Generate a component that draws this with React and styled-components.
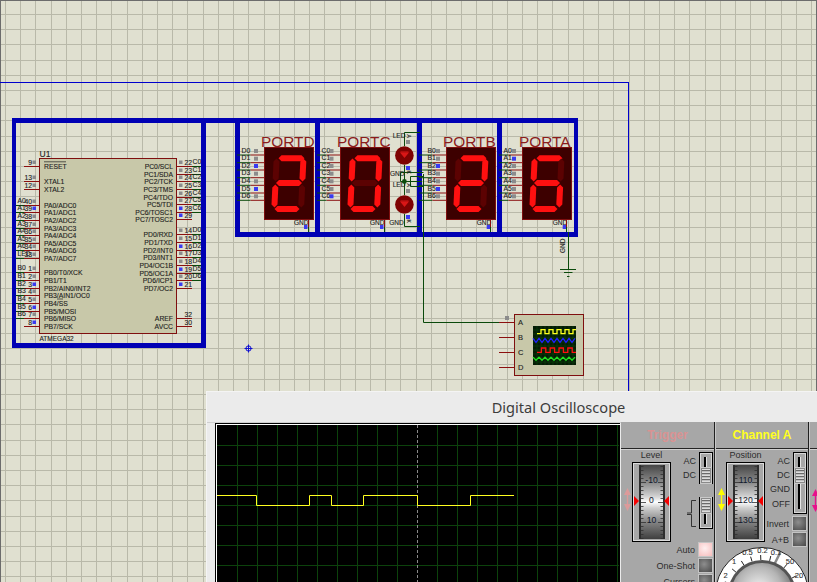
import React from 'react';
import styled, { createGlobalStyle } from 'styled-components';

const Global = createGlobalStyle`
  html, body { margin: 0; padding: 0; background: #e0e0d0; overflow: hidden; }
  #root { width: 817px; height: 582px; }
`;

/* ---------- desktop ---------- */
const Desktop = styled.div`
  position: relative; width: 817px; height: 582px; overflow: hidden; background: #e0e0d0;
`;
const Sheet = styled.svg`
  display: block; width: 817px; height: 582px;
  font-family: "Liberation Sans", Arial, sans-serif;
`;
const GridLine = styled.line`stroke: #b9b9a9; stroke-width: 1; shape-rendering: crispEdges;`;
const EdgeLine = styled.line`stroke: #6c6c6c; stroke-width: 1; shape-rendering: crispEdges;`;
const Frame = styled.path`fill: none; stroke: #0000cc; stroke-width: 1.3; shape-rendering: crispEdges;`;
const Bus = styled.rect`fill: #0000b4; shape-rendering: crispEdges;`;
const Wire = styled.path`fill: none; stroke: ${p => (p.$red ? '#8b0f0f' : '#0b4a0b')}; stroke-width: 1;`;
const Chip = styled.rect`fill: #c8c8a9; stroke: #7f0f0f; stroke-width: 1;`;
const Small = styled.text`
  font-size: ${p => p.$size || 6.8}px; fill: ${p => p.$fill || '#1d1d1d'};
  stroke: ${p => p.$fill || '#1d1d1d'}; stroke-width: 0.12;
  text-anchor: ${p => p.$anchor || 'start'};
`;
const Marker = styled.rect`fill: ${p => (p.$on ? '#3a3af0' : '#8c8c8c')};`;
const DisplayBody = styled.rect`fill: #3d0000; stroke: #7f0f0f; stroke-width: 1;`;
const Segment = styled.polygon`fill: ${p => (p.$on ? '#ff1010' : '#5c0202')};`;
const PortName = styled.text`font-size: 15.4px; fill: #8b1c1c;`;
const LedBody = styled.circle`fill: #7e0202;`;
const LedMark = styled.path`fill: #d91616;`;

/* ---------- oscilloscope window ---------- */
const ScopeWindow = styled.div`
  position: absolute; left: 207px; top: 392px; width: 610px; height: 190px;
  background: #ebebeb; box-shadow: 0 0 0 1px #f4f4f4; overflow: hidden;
  display: flex; flex-direction: column;
`;
const TitleBar = styled.div`
  height: 30px; flex: none; display: flex; align-items: center; justify-content: center;
  padding-left: 93px; padding-bottom: 1px; box-sizing: border-box;
  font: 14.6px "Noto Sans", "Open Sans", sans-serif; color: #3c3c3c;
`;
const ScopeBody = styled.div`
  flex: 1; display: flex; padding-left: 8px; min-height: 0;
  background: linear-gradient(#cfcfcf 1px, #ebebeb 1px);
`;
const ScreenFrame = styled.div`
  margin-top: 1px; width: 403px; flex: none; background: #000;
  border-left: 1px solid #000; border-top: 1px solid #000; box-sizing: content-box;
  box-shadow: inset 1px 1px 0 #fff; padding: 1px 0 0 1px; margin-right: 1px;
`;
const ScreenPlot = styled.svg`display: block; width: 402px; height: 157px;`;
const Panel = styled.section`
  flex: ${p => (p.$width ? 'none' : '1')}; width: ${p => (p.$width ? `${p.$width}px` : 'auto')};
  background: #a7a7a7; border-right: ${p => (p.$width ? '1px solid #202020' : '0')};
  box-shadow: ${p => (p.$width ? '1px 0 0 #c8c8c8' : 'none')};
  margin-right: ${p => (p.$width ? '1px' : '0')};
  display: flex; flex-direction: column; overflow: hidden;
  font-family: "Liberation Sans", Arial, sans-serif;
`;
const PanelHeader = styled.header`
  height: 26px; flex: none; display: flex; align-items: center; justify-content: center;
  border-bottom: 1px solid #252525; box-shadow: 0 1px 0 #cfcfcf;
  font-size: 12px; font-weight: bold; color: ${p => p.$color}; white-space: nowrap;
`;
const PanelTop = styled.div`
  display: flex; justify-content: space-between; padding: 0 1px 0 ${p => p.$left}px; flex: none;
`;
const WheelColumn = styled.div`display: flex; flex-direction: column; align-items: center; width: 39px; flex: none;`;
const WheelTitle = styled.div`
  height: 13px; font-size: 9px; line-height: 13px; color: #2c2c2c;
`;
const WheelBox = styled.div`
  position: relative; width: 39px; height: 80px; box-sizing: border-box;
  border: 1px solid #000; box-shadow: inset 0 0 0 1px #dcdcdc;
  display: flex; align-items: center; justify-content: center;
`;
const WheelFace = styled.div`
  position: relative; width: 26px; height: 74px; box-sizing: border-box;
  border-left: 2px solid #2d2d2d; border-right: 2px solid #2d2d2d;
  background: linear-gradient(#464646 0%, #8f8f8f 25%, #d0d0d0 42%, #fff 50%, #cfcfcf 58%, #8a8a8a 75%, #3f3f3f 100%);
  display: flex; flex-direction: column; align-items: center; padding-top: 5px;
`;
const WheelValue = styled.div`
  position: relative; height: 20px; flex: none; display: flex; align-items: center;
  font-size: 8.6px; color: #10182c;
`;
const WheelTicks = styled.svg`position: absolute; left: 0; top: 0; width: 22px; height: 74px;`;
const Pointer = styled.svg`
  position: absolute; top: 33px; ${p => (p.$right ? 'right: 1px' : 'left: 1px')};
  width: 5px; height: 10px; fill: #f40000; z-index: 1;
`;
const LevelArrow = styled.svg`
  position: absolute; top: 25px; left: -9px; width: 7px; height: 23px;
  fill: ${p => p.$color}; stroke: ${p => p.$color};
`;
const Controls = styled.div`
  flex: none; width: 42px;
  display: flex; flex-direction: column; align-items: flex-end; padding-top: 3px;
`;
const ControlRow = styled.div`
  display: flex; align-items: flex-start; gap: ${p => p.$gap ?? 3}px; margin-top: ${p => p.$top || 0}px;
`;
const ModeLabels = styled.div`
  display: flex; flex-direction: column; align-items: flex-end; padding-top: 2px;
  font-size: 9px; line-height: 14.2px; color: #2c2c2c;
`;
const SliderBox = styled.div`
  position: relative; width: 14px; height: ${p => p.$height}px; box-sizing: border-box; flex: none;
  border: 1px solid #000; box-shadow: inset 0 0 0 1px #d8d8d8;
`;
const SliderTrack = styled.div`
  position: absolute; left: 4px; width: 2px; top: 4px; bottom: 4px;
  background: #000; border-right: 1px solid #e4e4e4;
`;
const SliderThumb = styled.div`
  position: absolute; left: 1px; width: 10px; height: 15px; top: ${p => p.$top}px;
  background: repeating-linear-gradient(#dcdcdc 0 1px, #6a6a6a 1px 2px, #bdbdbd 2px 3px);
  border: 1px solid #8a8a8a; box-sizing: border-box; box-shadow: 0 0 0 1px #c9c9c9;
`;
const EdgeIcon = styled.svg`
  width: 9px; height: 27px; margin-top: 3px; fill: none; stroke: #333; stroke-width: 1; flex: none;
`;
const PushRow = styled.div`
  display: flex; align-items: center; gap: 3px; height: 15px; margin-top: ${p => p.$top ?? 1}px;
  font-size: 9px; color: #2c2c2c; white-space: nowrap;
`;
const PushButton = styled.div`
  width: 15px; height: 15px; box-sizing: border-box; border: 1px solid #c4c4c4; flex: none;
  background: ${p => (p.$lit
    ? 'radial-gradient(circle at 45% 40%, #fff0f0, #f7bcbc)'
    : 'radial-gradient(circle at 40% 40%, #8e8e8e, #474747)')};
`;
const SpareBody = styled.div`padding: 40px 0 0 2px;`;
const KnobArt = styled.svg`display: block; width: 94px; height: 36px; margin-left: -1px; flex: none;
  font-family: "Liberation Sans", Arial, sans-serif;`;

/* ---------- data ---------- */
const verticals = Array.from({ length: 54 }, (_, i) => Math.round(5 + 15.208 * i) + 0.5);
const horizontals = Array.from({ length: 38 }, (_, i) => Math.round(14 + 15.2 * i) + 0.5);

const leftPins = [
  ['RESET', '9', 166], ['XTAL1', '13', 181], ['XTAL2', '12', 189],
  ['PA0/ADC0', '40', 205, 'A0'], ['PA1/ADC1', '39', 212, 'A1', 1], ['PA2/ADC2', '38', 220, 'A2'],
  ['PA3/ADC3', '37', 228, 'A3'], ['PA4/ADC4', '36', 235, 'A4'], ['PA5/ADC5', '35', 243, 'A5'],
  ['PA6/ADC6', '34', 250, 'A6'], ['PA7/ADC7', '33', 258, 'LED'],
  ['PB0/T0/XCK', '1', 272, 'B0'], ['PB1/T1', '2', 280, 'B1'], ['PB2/AIN0/INT2', '3', 288, 'B2', 1],
  ['PB3/AIN1/OC0', '4', 295, 'B3'], ['PB4/SS', '5', 303, 'B4'], ['PB5/MOSI', '6', 311, 'B5', 1],
  ['PB6/MISO', '7', 318, 'B6'], ['PB7/SCK', '8', 326, null, 1],
];
const rightPins = [
  ['PC0/SCL', '22', 166, 'C0'], ['PC1/SDA', '23', 174, 'C1'], ['PC2/TCK', '24', 181, 'C2'],
  ['PC3/TMS', '25', 189, 'C3'], ['PC4/TDO', '26', 197, 'C4'], ['PC5/TDI', '27', 204, 'C5'],
  ['PC6/TOSC1', '28', 212, 'C6', 1], ['PC7/TOSC2', '29', 219, null, 1],
  ['PD0/RXD', '14', 234, 'D0'], ['PD1/TXD', '15', 242, 'D1'], ['PD2/INT0', '16', 250, 'D2', 1],
  ['PD3/INT1', '17', 257, 'D3'], ['PD4/OC1B', '18', 265, 'D4'], ['PD5/OC1A', '19', 273, 'D5', 1],
  ['PD6/ICP1', '20', 280, 'D6'], ['PD7/OC2', '21', 288, null, 1],
  ['AREF', '32', 318, null, 0, true], ['AVCC', '30', 326, null, 0, true],
];
const pinRows = [155, 162.7, 170, 177.7, 185.3, 193, 200.3];
const displays = [
  { name: 'PORTD', prefix: 'D', x: 264.5, wire: 237, label: 241.5, mark: 256, blue: [2, 5], on: 'abged', gnd: 294 },
  { name: 'PORTC', prefix: 'C', x: 340.5, wire: 317, label: 321.5, mark: 331.5, blue: [6], on: 'abcdef', gnd: 370 },
  { name: 'PORTB', prefix: 'B', x: 446.5, wire: 419, label: 427.5, mark: 438, blue: [2, 5], on: 'abged', gnd: 476.7 },
  { name: 'PORTA', prefix: 'A', x: 522.5, wire: 499, label: 503.5, mark: 514, blue: [1], on: 'afgedc', gnd: 552.7 },
];

const hSeg = (a, b, c) => `${a},${c} ${a + 3},${c - 3} ${b - 3},${c - 3} ${b},${c} ${b - 3},${c + 3} ${a + 3},${c + 3}`;
const vSeg = (xt, xb, a, b) => `${xt},${a} ${xt + 3},${a + 3} ${xb + 3},${b - 3} ${xb},${b} ${xb - 3},${b - 3} ${xt - 3},${a + 3}`;
const SEGMENTS = {
  a: hSeg(14, 40, 10.7),
  g: hSeg(11.5, 37.5, 35.5),
  d: hSeg(10, 35, 61.4),
  f: vSeg(12, 11.2, 11, 34),
  b: vSeg(38.8, 38, 11, 34),
  e: vSeg(10.8, 10, 37, 60),
  c: vSeg(37.6, 36.8, 37, 60),
};

const square = (start, end, y1, y2, w) => {
  let d = `M${start} ${y2}`; let x = start; let hi = false;
  while (x < end) {
    const n = Math.min(x + w, end);
    d += `H${n}`;
    if (n < end) { hi = !hi; d += `V${hi ? y1 : y2}`; }
    x = n;
  }
  return d;
};
const ripple = (start, end, y, a, w) => {
  const pts = []; let up = true;
  for (let x = start; x <= end; x += w) { pts.push(`${x},${up ? y - a : y + a}`); up = !up; }
  return `M${pts.join('L')}`;
};

const SevenSeg = ({ d }) => (
  <g>
    <PortName x={d.x - 3.5} y={147}>{d.name}</PortName>
    <DisplayBody x={d.x} y={147.5} width={49} height={72} />
    <g transform={`translate(${d.x} 147.5)`}>
      {Object.entries(SEGMENTS).map(([k, pts]) => <Segment key={k} points={pts} $on={d.on.includes(k)} />)}
    </g>
    {pinRows.map((y, i) => (
      <g key={y}>
        <Wire d={`M${d.wire} ${y}H${d.x - 14}`} />
        <Wire $red d={`M${d.x - 14} ${y}H${d.x}`} />
        <Small x={d.label} y={y - 2.5}>{`${d.prefix}${i}`}</Small>
        <Marker x={d.mark - 2} y={y - 6} width={4} height={4} $on={d.blue.includes(i)} />
      </g>
    ))}
    <Small x={d.gnd} y={225} $size={6.5}>GND</Small>
    <Marker x={d.gnd + 10} y={225} width={3.5} height={4} $on />
    <Wire $red d={`M${d.x + 44} 220V227`} />
    <Wire d={`M${d.x + 44} 227V232`} />
  </g>
);

const Led = ({ cy }) => (
  <g>
    <LedBody cx={404.4} cy={cy} r={9.3} />
    <LedMark d={`M400 ${cy - 3}H409L404.5 ${cy + 2.5}Z`} />
    <LedMark d={`M400.5 ${cy - 4}H408.5V${cy - 3}H400.5Z`} />
    <Small x={392.7} y={cy - 18} $size={6.5}>LED</Small>
    <Marker x={406} y={cy - 15.5} width={4} height={4} />
    <Marker x={406} y={cy + 10.5} width={4} height={4} $on />
    <Small $size={5} x={0} y={0} transform={`translate(406.5 ${cy - 21}) rotate(90)`}>A</Small>
    <Small $size={5} x={0} y={0} transform={`translate(406.5 ${cy + 15}) rotate(90)`}>K</Small>
  </g>
);

const Schematic = () => (
  <Sheet viewBox="0 0 817 582">
    {verticals.map(x => <GridLine key={x} x1={x} x2={x} y1={0} y2={582} />)}
    {horizontals.map(y => <GridLine key={y} x1={0} x2={817} y1={y} y2={y} />)}
    <EdgeLine x1={0} x2={817} y1={0.5} y2={0.5} />
    <EdgeLine x1={0.5} x2={0.5} y1={0} y2={582} />
    <EdgeLine x1={816.5} x2={816.5} y1={0} y2={582} />
    <Frame d="M0 82.5H628.5V400" />

    {/* wires under the buses */}
    <Wire d="M423.5 174V322.5H499" />
    <Wire $red d="M499 322.5H514" />
    <Wire d="M404.5 132.5V146M404.5 165V195M404.5 214V226.5" />
    <Wire d="M400.5 172.5V181.5M410.5 176.5V186.5" />

    {/* MCU */}
    <Small $size={8.5} x={39.5} y={156.5}>U1</Small>
    <Chip x={39.5} y={158.5} width={137} height={175} />
    {leftPins.map(([name, num, y, net, blue]) => (
      <g key={name}>
        <Wire $red d={`M24 ${y + 0.5}H39`} />
        {net && <Wire d={`M13 ${y + 0.5}H24`} />}
        <Small x={44} y={y + 2.5}>{name}</Small>
        <Small x={32} y={y - 1} $anchor="end">{num}</Small>
        <Marker x={32.5} y={y - 5.5} width={3.5} height={3.5} $on={blue} />
        {net && <Small x={17.5} y={y - 2.5}>{net}</Small>}
      </g>
    ))}
    <path d="M44 161.8H66M57 299H63" stroke="#1d1d1d" strokeWidth={0.7} fill="none" />
    {rightPins.map(([name, num, y, net, blue, plain]) => (
      <g key={name}>
        <Wire $red d={`M177 ${y + 0.5}H192`} />
        {net && <Wire d={`M192 ${y + 0.5}H203`} />}
        <Small x={173} y={y + 2.5} $anchor="end">{name}</Small>
        <Small x={184.5} y={y - 1}>{num}</Small>
        {!plain && <Marker x={179} y={y - 5.5} width={3.5} height={3.5} $on={blue} />}
        {net && <Small x={192.5} y={y - 2.5}>{net}</Small>}
      </g>
    ))}
    <Small x={39.5} y={340.5} $size={6.5}>ATMEGA32</Small>

    {/* subsheet buses */}
    <Bus x={12} y={118} width={566} height={5} />
    <Bus x={12} y={118} width={4} height={230} />
    <Bus x={201} y={118} width={5} height={230} />
    <Bus x={12} y={343} width={194} height={5} />
    <Bus x={235} y={232} width={343} height={5} />
    <Bus x={235} y={118} width={5} height={119} />
    <Bus x={315} y={118} width={5} height={119} />
    <Bus x={417} y={118} width={5} height={119} />
    <Bus x={497} y={118} width={5} height={119} />
    <Bus x={574} y={118} width={4} height={119} />

    <Wire d="M404.5 132.5H420M400.5 172.5H423.5M400.5 181.5H422M410.5 176.5H423.5M410.5 186.5H423M404.5 226.5H420" />
    <Wire d="M423.5 174V237" />

    {displays.map(d => <SevenSeg key={d.name} d={d} />)}
    <Led cy={155.5} />
    <Led cy={204.5} />
    <Small x={390} y={175.7} $size={6.5}>GND</Small>
    <Small x={389.3} y={225} $size={6.5}>GND</Small>
    <circle cx={404.4} cy={181.5} r={2.4} fill="#0b4a0b" />

    {/* ground */}
    <Wire d="M568.5 232V269.5M560 269.5H576M564 272.5H572.5M567 276.5H569.5" />
    <Small transform="translate(565 253) rotate(-90)" x={0} y={0} $size={6.5}>GND</Small>

    {/* logic analyser symbol */}
    <Marker x={505} y={316} width={4} height={4} />
    <Wire $red d="M499 337.5H514M499 352.5H514M499 367.5H514" />
    <Chip x={514.5} y={314.5} width={69} height={61} />
    <Small $size={7.5} x={518} y={325}>A</Small>
    <Small $size={7.5} x={518} y={340}>B</Small>
    <Small $size={7.5} x={518} y={355}>C</Small>
    <Small $size={7.5} x={518} y={370}>D</Small>
    <rect x={533} y={326} width={43} height={39} fill="#041c04" />
    <path
      d={[330, 334, 338, 342, 346, 350, 354, 358, 362].map(y => `M533 ${y}H576`).join('') + [537, 541, 545, 549, 553, 557, 561, 565, 569, 573].map(x => `M${x} 326V365`).join('')}
      stroke="#0b3f0b" strokeWidth={0.7} fill="none"
    />
    <path d={square(537, 576, 329.7, 333.7, 4)} stroke="#ffff20" strokeWidth={1.3} fill="none" />
    <path d={ripple(533, 576, 340.3, 2, 3)} stroke="#2020ff" strokeWidth={1.3} fill="none" />
    <path d={square(537, 576, 348, 352.3, 4.4)} stroke="#ff1010" strokeWidth={1.3} fill="none" />
    <path d={ripple(533, 576, 358.7, 1.6, 3)} stroke="#20e020" strokeWidth={1.3} fill="none" />

    {/* origin marker */}
    <circle cx={248.5} cy={348.5} r={2.6} fill="none" stroke="#1010d0" />
    <path d="M244.5 348.5H252.5M248.5 344.5V352.5" stroke="#1010d0" fill="none" />
  </Sheet>
);

const Trace = () => {
  const grid = [];
  for (let i = 1; i < 21; i++) if (i !== 10) grid.push(`M${20 * i + 0.5} 0V157`);
  for (let i = 1; i < 8; i++) grid.push(`M0 ${20 * i + 0.5}H402`);
  return (
    <ScreenPlot viewBox="0 0 402 157">
      <path d={grid.join('')} stroke="#0c420c" fill="none" />
      <path d="M200.5 0V157" stroke="#8a8a8a" strokeDasharray="3 2" fill="none" />
      <path d="M0 70.5H39.5V80.5H92.5V70.5H114.5V80.5H146.5V70.5H200.5V80.5H253.5V70.5H297" stroke="#ffff20" fill="none" />
    </ScreenPlot>
  );
};

const Ticks = () => {
  const parts = [];
  for (let i = 0; i <= 18; i++) {
    const y = 1 + i * 4;
    const len = i % 5 === 4 ? 5 : 2.5;
    parts.push(`M0 ${y + 0.5}H${len}M22 ${y + 0.5}H${22 - len}`);
  }
  return (
    <WheelTicks viewBox="0 0 22 74">
      <path d={parts.join('')} stroke="#303030" strokeWidth={0.8} fill="none" />
    </WheelTicks>
  );
};

const Wheel = ({ title, values, arrow }) => (
  <WheelColumn>
    <WheelTitle>{title}</WheelTitle>
    <WheelBox>
      <LevelArrow viewBox="0 0 7 23" $color={arrow}>
        <path d="M3.5 0L7 7H0ZM3.5 23L7 16H0Z" stroke="none" />
        <path d="M3.5 6V17" fill="none" strokeWidth={1.4} />
      </LevelArrow>
      <Pointer viewBox="0 0 5 10"><path d="M0 0L5 5L0 10Z" /></Pointer>
      <WheelFace>
        <Ticks />
        {values.map(v => <WheelValue key={v}>{v}</WheelValue>)}
      </WheelFace>
      <Pointer $right viewBox="0 0 5 10"><path d="M5 0L0 5L5 10Z" /></Pointer>
    </WheelBox>
  </WheelColumn>
);

const Slider = ({ height, thumb }) => (
  <SliderBox $height={height}>
    <SliderTrack />
    <SliderThumb $top={thumb} />
  </SliderBox>
);

const Knob = () => {
  const cx = 47; const cy = 47;
  const ticks = [-72, -50, -32, -17, -2, 13, 40, 62].map(a => {
    const r = (a * Math.PI) / 180;
    return `M${cx + 34 * Math.sin(r)} ${cy - 34 * Math.cos(r)}L${cx + 39 * Math.sin(r)} ${cy - 39 * Math.cos(r)}`;
  }).join('');
  return (
    <KnobArt viewBox="0 0 94 36">
      <defs>
        <radialGradient id="knobFace" cx="0.45" cy="0.42" r="0.6">
          <stop offset="0" stopColor="#f2f2f2" />
          <stop offset="0.6" stopColor="#b5b5b5" />
          <stop offset="1" stopColor="#6c6c6c" />
        </radialGradient>
      </defs>
      <circle cx={cx} cy={cy} r={46.5} fill="#fff" stroke="#222" />
      <path d="M65.5 5L59.5 17" stroke="#8a8a8a" strokeWidth={2.5} fill="none" />
      <path d={ticks} stroke="#222" fill="none" />
      <circle cx={cx} cy={cy} r={34} fill="#545454" />
      <circle cx={cx} cy={cy} r={31} fill="url(#knobFace)" />
      <Small $size={7.5} x={32.5} y={8} $anchor="middle" $fill="#333">0.5</Small>
      <Small $size={7.5} x={47.5} y={6} $anchor="middle" $fill="#333">0.2</Small>
      <Small $size={7.5} x={61} y={8} $anchor="middle" $fill="#333">0.1</Small>
      <Small $size={7.5} x={19} y={17} $anchor="middle" $fill="#333">1</Small>
      <Small $size={7.5} x={10.5} y={31} $anchor="middle" $fill="#333">2</Small>
      <Small $size={7.5} x={75} y={17} $anchor="middle" $fill="#333">50</Small>
      <Small $size={7.5} x={84} y={31} $anchor="middle" $fill="#333">20</Small>
    </KnobArt>
  );
};

const Oscilloscope = () => (
  <ScopeWindow>
    <TitleBar>Digital Oscilloscope</TitleBar>
    <ScopeBody>
      <ScreenFrame><Trace /></ScreenFrame>
      <Panel $width={93}>
        <PanelHeader $color="#d99393">Trigger</PanelHeader>
        <PanelTop $left={11}>
          <Wheel title="Level" values={['-10', '0', '10']} arrow="#dc9a9a" />
          <Controls>
            <ControlRow>
              <ModeLabels><span>AC</span><span>DC</span></ModeLabels>
              <Slider height={32} thumb={15} />
            </ControlRow>
            <ControlRow $top={13}>
              <EdgeIcon viewBox="0 0 9 27">
                <path d="M9 .5H4.5V13H0M0 14.5H4.5V26.5H9" />
              </EdgeIcon>
              <Slider height={32} thumb={0} />
            </ControlRow>
            <PushRow $top={13}>Auto<PushButton $lit /></PushRow>
            <PushRow>One-Shot<PushButton /></PushRow>
            <PushRow>Cursors<PushButton /></PushRow>
          </Controls>
        </PanelTop>
      </Panel>
      <Panel $width={92}>
        <PanelHeader $color="#ffff20">Channel A</PanelHeader>
        <PanelTop $left={10}>
          <Wheel title="Position" values={['110', '120', '130']} arrow="#ffff00" />
          <Controls>
            <ControlRow>
              <ModeLabels><span>AC</span><span>DC</span><span>GND</span><span>OFF</span></ModeLabels>
              <Slider height={62} thumb={15} />
            </ControlRow>
            <PushRow $top={2}>Invert<PushButton /></PushRow>
            <PushRow>A+B<PushButton /></PushRow>
          </Controls>
        </PanelTop>
        <Knob />
      </Panel>
      <Panel>
        <PanelHeader $color="#f0f0f0" />
        <SpareBody>
          <svg viewBox="0 0 7 23" width="7" height="23" fill="#e8108c" stroke="#e8108c">
            <path d="M3.5 0L7 7H0ZM3.5 23L7 16H0Z" stroke="none" />
            <path d="M3.5 6V17" fill="none" strokeWidth={1.4} />
          </svg>
        </SpareBody>
      </Panel>
    </ScopeBody>
  </ScopeWindow>
);

export default function App() {
  return (
    <Desktop>
      <Global />
      <Schematic />
      <Oscilloscope />
    </Desktop>
  );
}
